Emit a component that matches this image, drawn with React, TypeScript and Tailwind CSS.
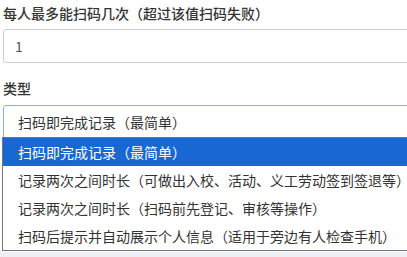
import React from 'react';

const font = { fontFamily: '"Noto Sans CJK SC", "Noto Sans", sans-serif' };

const options = [
  '扫码即完成记录（最简单）',
  '记录两次之间时长（可做出入校、活动、义工劳动签到签退等）',
  '记录两次之间时长（扫码前先登记、审核等操作）',
  '扫码后提示并自动展示个人信息（适用于旁边有人检查手机）',
];

export default function App() {
  return (
    <div className="relative w-[407px] h-[257px] overflow-hidden bg-white font-['Noto_Sans_CJK_SC',sans-serif]">
      <div className="pl-[3px] pt-[3px]">
        <label className="block h-5 text-[14px] leading-5 font-medium text-[#333] whitespace-nowrap">
          每人最多能扫码几次（超过该值扫码失败）
        </label>
        <div className="mt-[6px] h-[34px] w-[420px] border border-[#ccc] rounded-[3px] flex items-center pl-[11px] text-[14px] text-[#555]">
          1
        </div>
        <label className="block mt-[15px] h-5 text-[14px] leading-5 font-medium text-[#333]">
          类型
        </label>
        <div className="mt-[7px] h-[34px] w-[420px] border border-[#80b4f0] rounded-[3px] flex items-center pl-[14px] text-[14px] text-[#333] whitespace-nowrap">
          扫码即完成记录（最简单）
        </div>
      </div>
      <div className="absolute left-0 right-0 top-[252px] bottom-0 bg-[#eef0f5]" />

      {/* native select popup */}
      <ul
        className="absolute left-[2px] top-[137px] w-[430px] border border-[#767676] bg-white text-[14px] whitespace-nowrap"
        style={font}
      >
        {options.map((o, i) => (
          <li
            key={o}
            className={`h-[28px] flex items-center pl-[15px] ${
              i === 0 ? 'bg-[#1967d2] text-white' : 'text-[#333]'
            }`}
          >
            {o}
          </li>
        ))}
      </ul>
    </div>
  );
}
